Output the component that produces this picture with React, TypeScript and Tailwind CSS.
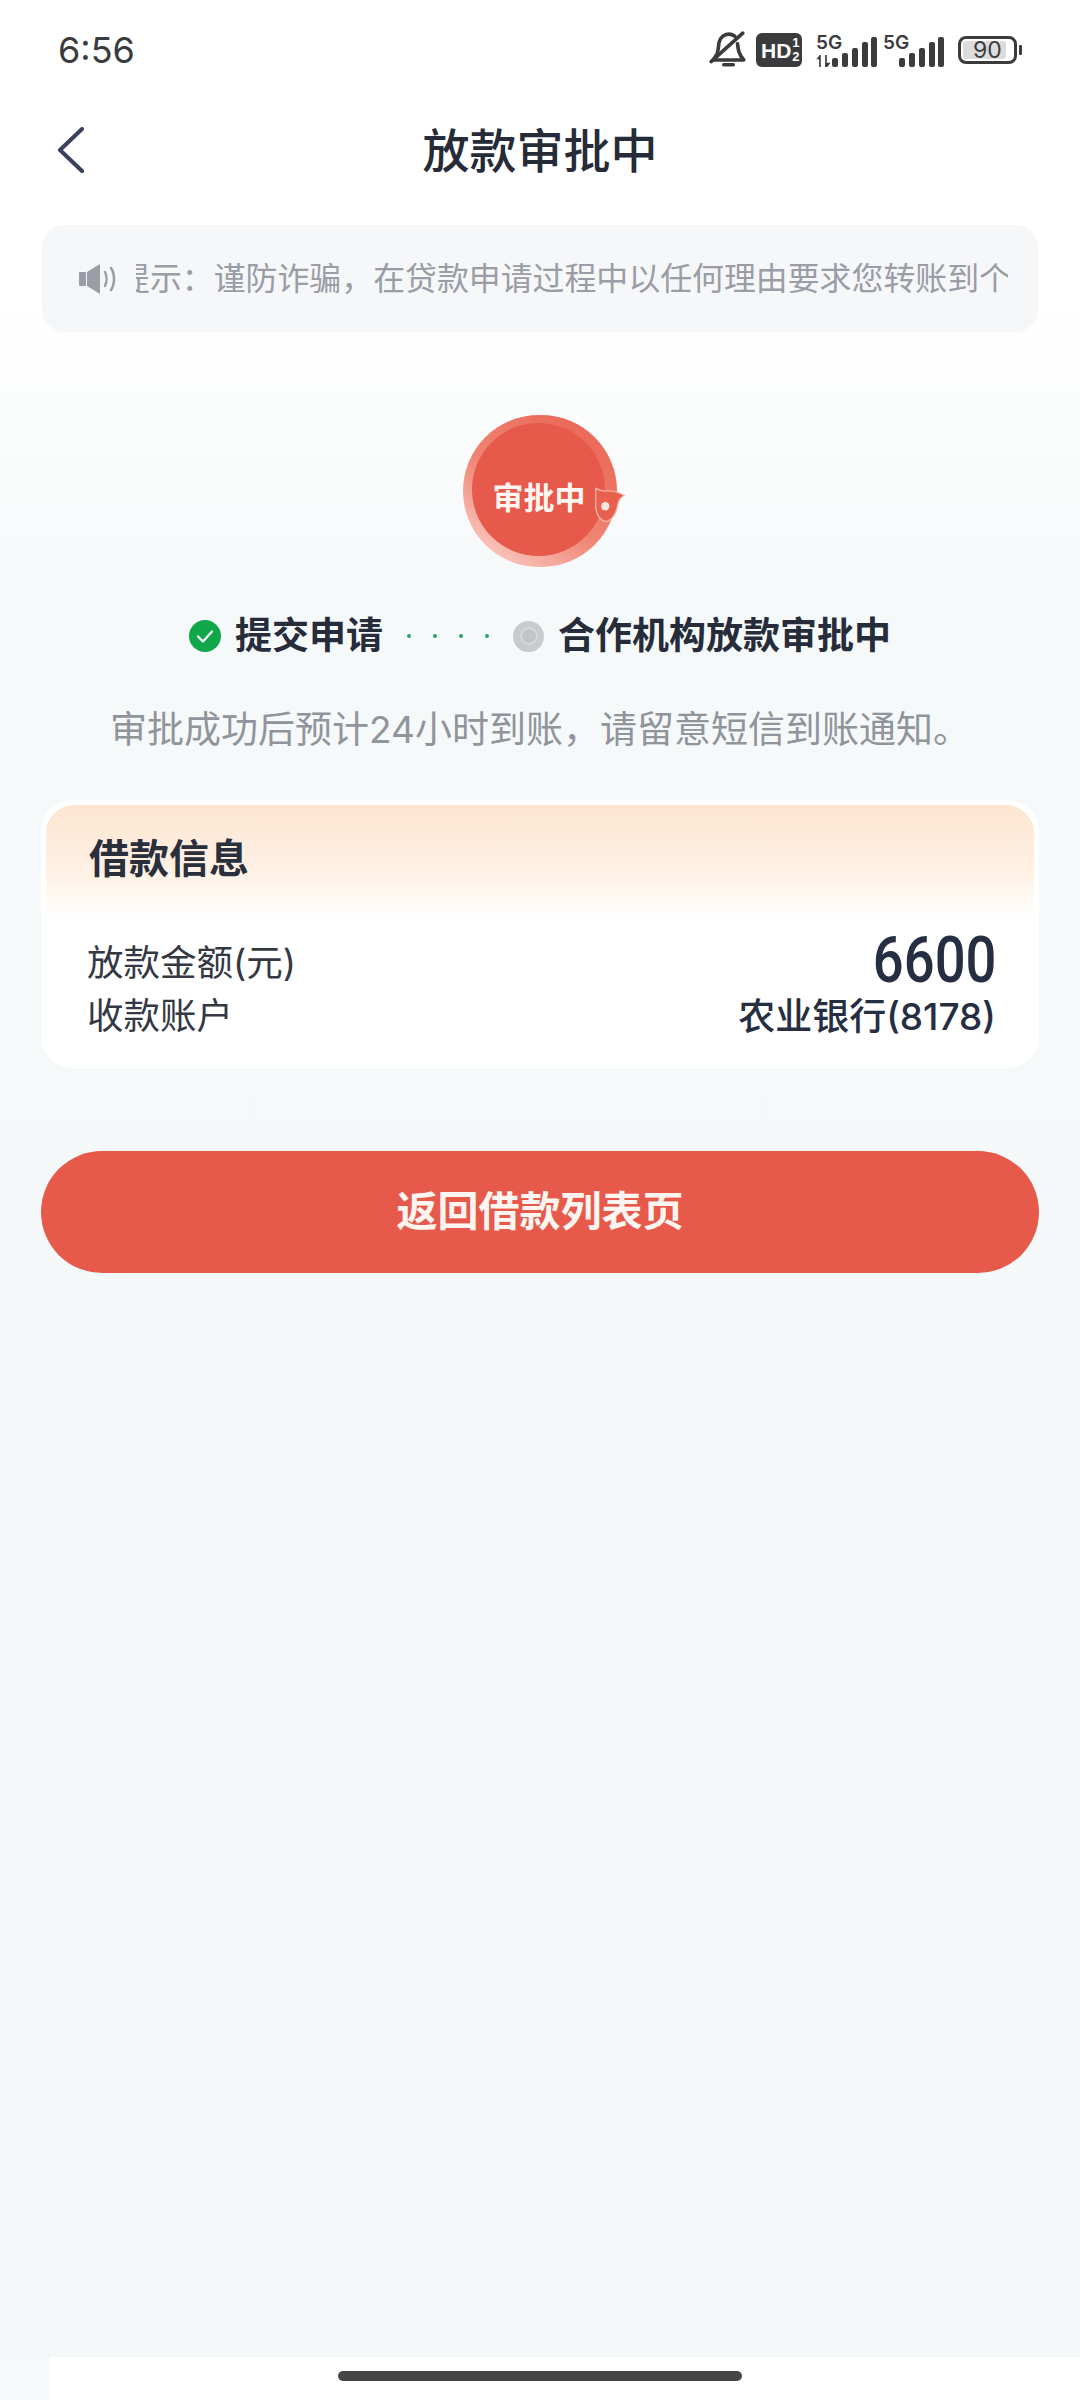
const SignalBars = () => (
  <svg width="45" height="30" viewBox="0 0 45 30" fill="#3b3b3d">
    <rect x="0" y="21" width="6" height="9" rx="2" />
    <rect x="10" y="16" width="6" height="14" rx="2" />
    <rect x="20" y="11" width="6" height="19" rx="2" />
    <rect x="30" y="5" width="6" height="25" rx="2" />
    <rect x="39" y="0" width="6" height="30" rx="2" />
  </svg>
);

const StatusBar = () => (
  <div className="h-[100px] pl-[58px] pr-[58px] flex items-center justify-between">
    <span className="text-[36px] leading-none text-[#3a3b3d] font-['Inter',sans-serif]">6:56</span>
    <div className="flex items-center">
      <svg width="38" height="38" viewBox="0 0 36 36" fill="none" stroke="#3b3b3d" strokeWidth="3.400" strokeLinecap="round" strokeLinejoin="round">
        <path d="M8 20c1-3 1-6 1.500-9 1-5 5-8 9-8 2 0 4 .6 6 2" />
        <path d="M27 12c.5 5 1 10 6 15.500H4c1-1.500 2-3 3-5" />
        <path d="M14 32h9" />
        <path d="M2 29 32 2" />
      </svg>
      <div className="ml-[9px] w-[46px] h-[34px] rounded-[6px] bg-[#3b3b3d] flex items-center pl-[5px] text-white font-['Liberation_Sans',sans-serif] font-bold overflow-hidden">
        <span className="text-[21px] leading-none">HD</span>
        <span className="flex flex-col items-center text-[13px] leading-[14px] ml-[1px]">
          <span>1</span>
          <span>2</span>
        </span>
      </div>
      <div className="ml-[14px] relative w-[61px] h-[34px]">
        <span className="absolute left-0 top-0 text-[19px] leading-[19px] font-semibold text-[#3b3b3d] font-['Inter',sans-serif]">5G</span>
        <svg className="absolute left-0 bottom-0" width="15" height="12" viewBox="0 0 13 11" fill="#3b3b3d">
          <path d="M0 4 3 0l1 0v11H2.500V4z" />
          <path d="M8 0h1.500v7H13l-3 4H8z" />
        </svg>
        <div className="absolute right-0 bottom-0">
          <SignalBars />
        </div>
      </div>
      <div className="ml-[6px] relative w-[61px] h-[34px]">
        <span className="absolute left-0 top-0 text-[19px] leading-[19px] font-semibold text-[#3b3b3d] font-['Inter',sans-serif]">5G</span>
        <div className="absolute right-0 bottom-0">
          <SignalBars />
        </div>
      </div>
      <div className="ml-[14px] w-[59px] h-[28px] rounded-[8px] border-[3px] border-[#3b3b3d] p-[2px] relative">
        <div className="h-full w-[88%] rounded-[3px] bg-[#dcdcdc]" />
        <span className="absolute inset-0 flex items-center justify-center text-[23px] leading-none text-[#3b3b3d] font-['Inter',sans-serif]">90</span>
      </div>
      <div className="ml-[2px] w-[3px] h-[10px] rounded-[1px] bg-[#3b3b3d]" />
    </div>
  </div>
);

const Steps = () => (
  <div className="mt-[44px] h-[50px] flex items-center justify-center text-[37px] font-semibold text-[#262c3a]">
    <svg width="32" height="32" viewBox="0 0 32 32">
      <circle cx="16" cy="16" r="16" fill="#10a74b" />
      <path d="M9 16.500l5 5 9-10" fill="none" stroke="#fff" strokeWidth="2.200" strokeLinecap="round" strokeLinejoin="round" />
    </svg>
    <span className="ml-[14px]">提交申请</span>
    <div className="ml-[24px] flex gap-[22px]">
      <span className="size-[4px] rounded-full bg-[#2ea56a]" />
      <span className="size-[4px] rounded-full bg-[#2ea56a]" />
      <span className="size-[4px] rounded-full bg-[#2ea56a]" />
      <span className="size-[4px] rounded-full bg-[#2ea56a]" />
    </div>
    <div className="ml-[24px] size-[31px] rounded-full bg-[#c9cacd] flex items-center justify-center">
      <div className="size-[18px] rounded-full border-2 border-[#d6d7d9] bg-[#c4c5c8]" />
    </div>
    <span className="ml-[14px]">合作机构放款审批中</span>
  </div>
);

const App = () => {
  return (
    <div className="w-[1080px] h-[2400px] flex flex-col overflow-hidden bg-[#f4f8f9] font-['Inter','Noto_Sans_CJK_SC',sans-serif]">
      <div className="flex-1 bg-[linear-gradient(to_bottom,#ffffff_0px,#ffffff_300px,#f6f9fa_580px,#f4f8f9_100%)]">
        <StatusBar />

        <div className="h-[100px] relative flex items-center justify-center">
          <svg className="absolute left-[57px] top-[27px]" width="28" height="46" viewBox="0 0 28 46" fill="none" stroke="#39425a" strokeWidth="4" strokeLinecap="round" strokeLinejoin="round">
            <path d="M25 2 3 23l22 21" />
          </svg>
          <h1 className="text-[47px] leading-none text-[#262b38] font-medium">放款审批中</h1>
        </div>

        <div className="mt-[25px] mx-[42px] h-[107px] rounded-[22px] bg-[#f5f7f9] flex items-center pl-[37px]">
          <svg width="38" height="32" viewBox="0 0 38 32" fill="#9a9ca6">
            <rect x="0" y="9" width="7" height="14" rx="1" />
            <path d="M8 9 21 1v30L8 23z" />
            <path d="M26 9c2 4 2 10 0 14M32 5c4 6 4 16 0 22" fill="none" stroke="#9a9ca6" strokeWidth="2.500" strokeLinecap="round" />
          </svg>
          <div className="ml-[19px] w-[872px] overflow-hidden">
            <p className="-ml-[18px] whitespace-nowrap text-[31.900px] leading-none text-[#9a9ca6]">提示：谨防诈骗，在贷款申请过程中以任何理由要求您转账到个</p>
          </div>
        </div>

        <div className="mt-[83px] mx-auto w-[154px] h-[152px] rounded-full bg-[linear-gradient(215deg,#e9604f,#f08574_55%,#fcdcd5)] flex items-center justify-center relative">
          <div className="size-[133px] -translate-x-[2px] -translate-y-[2px] rounded-full bg-[#e6594b] flex items-center justify-center">
            <span className="mt-[16px] ml-[2px] text-[31px] leading-none font-bold text-[#fff6f2]">审批中</span>
          </div>
          <svg className="absolute left-[131px] top-[71px]" width="32" height="38" viewBox="0 0 26 32">
            <path d="M1 2c4 2 7 3 10 2 4 0 9 1 14 4-4 2-5 5-6 10-1 6-5 11-9 12-5-1-8-5-9-11z" fill="#e8614f" stroke="#f7b9ad" strokeWidth="1" />
            <circle cx="9" cy="17" r="3.500" fill="#fbe4dc" />
          </svg>
        </div>

        <Steps />

        <p className="mt-[44px] h-[50px] flex items-center justify-center text-[37px] text-[#90949b]">审批成功后预计24小时到账，请留意短信到账通知。</p>

        <div className="mt-[45px] mx-[41px] h-[268px] rounded-[32px] bg-white p-[5px]">
          <div className="h-[112px] rounded-t-[28px] pl-[43px] pb-[4px] flex items-center bg-[linear-gradient(to_bottom,#fde5d1,#fff1e5_60%,#ffffff)]">
            <h2 className="text-[40px] leading-none font-semibold text-[#2a2f3c]">借款信息</h2>
          </div>
          <div className="pl-[41px] pr-[38px] pt-[20px]">
            <div className="flex items-center justify-between h-[53px]">
              <span className="text-[36.500px] leading-none text-[#343843]">放款金额(元)</span>
              <span className="text-[64px] leading-none font-medium text-[#262e42] scale-x-[0.85] origin-right font-['Roboto',sans-serif] -mt-[6px]">6600</span>
            </div>
            <div className="flex items-center justify-between h-[53px]">
              <span className="text-[36.500px] leading-none text-[#343843]">收款账户</span>
              <span className="text-[37px] leading-none font-medium text-[#262e42]">农业银行(8178)</span>
            </div>
          </div>
        </div>

        <button className="mt-[83px] mx-[41px] w-[998px] h-[122px] rounded-full bg-[#e6594b] text-[41px] font-semibold text-[#fff5f0] flex items-center justify-center">
          返回借款列表页
        </button>
      </div>

      <div className="h-[43px] bg-white relative flex items-start justify-center pt-[14px]">
        <div className="absolute left-0 top-0 bottom-0 w-[50px] bg-[#f6f8f9]" />
        <div className="w-[404px] h-[10px] rounded-full bg-[#454547]" />
      </div>
    </div>
  );
};

export default App;
